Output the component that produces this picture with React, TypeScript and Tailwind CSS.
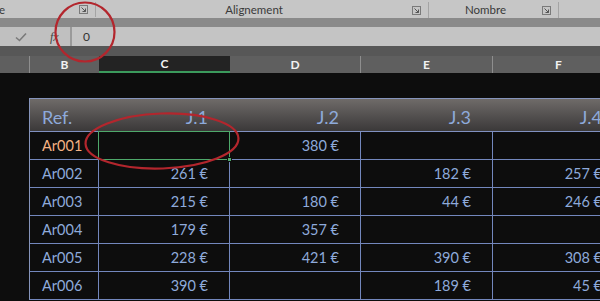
import React from "react";

const rows: string[][] = [
  ["Ar001", "", "380 €", "", ""],
  ["Ar002", "261 €", "", "182 €", "257 €"],
  ["Ar003", "215 €", "180 €", "44 €", "246 €"],
  ["Ar004", "179 €", "357 €", "", ""],
  ["Ar005", "228 €", "421 €", "390 €", "308 €"],
  ["Ar006", "390 €", "", "189 €", "45 €"],
];

const widths = ["w-[69px]", "w-[131px]", "w-[131px]", "w-[132px]", "w-[131px]"];

function Launcher() {
  return (
    <svg width="9" height="9" viewBox="0 0 9 9" className="shrink-0">
      <rect x="0.5" y="0.5" width="8" height="8" fill="none" stroke="#7a7a7a" />
      <path d="M2.5 2.5 L6.5 6.5 M6.5 3.5 V6.5 H3.5" fill="none" stroke="#555" />
    </svg>
  );
}

function RibbonGroup({ label, className }: { label: string; className: string }) {
  return (
    <div className={`flex items-center h-full border-r border-[#a4a4a4] pr-[3px] ${className}`}>
      <span className="flex-1 text-center">{label}</span>
      <div className="w-[13px] flex justify-start">
        <Launcher />
      </div>
    </div>
  );
}

export default function App() {
  return (
    <div className="relative w-[600px] h-[301px] overflow-hidden bg-[#0d0d0d] font-['Lato',sans-serif]">
      {/* ribbon labels */}
      <div className="h-[18px] bg-[#c6c6c6] flex items-start pt-[2px] text-[11.5px] text-[#3a3a3a]">
        <div className="w-[96px] h-[15px] flex items-center border-r border-[#a4a4a4] pr-[3px]">
          <span className="flex-1 -ml-[1px] leading-none">e</span>
          <div className="w-[13px]">
            <Launcher />
          </div>
        </div>
        <RibbonGroup label="Alignement" className="w-[333px] h-[15px]" />
        <RibbonGroup label="Nombre" className="w-[130px] h-[15px]" />
      </div>
      <div className="h-[9px] bg-[#8a8a8a]" />

      {/* formula bar */}
      <div className="h-[19px] bg-[#c0c0c0] flex items-center">
        <div className="w-[70px] h-full flex items-center">
          <svg width="12" height="10" viewBox="0 0 12 10" className="ml-[15px]">
            <path d="M1 5.5 L4.5 8.5 L11 1.5" fill="none" stroke="#7a7a7a" strokeWidth="1.6" />
          </svg>
          <span className="ml-[23px] text-[12px] italic font-['Liberation_Serif',serif] text-[#444]">
            fx
          </span>
        </div>
        <div className="w-[2px] h-full bg-[#9a9a9a]" />
        <div className="flex-1 h-full bg-[#c4c4c4] pl-[11px] flex items-center text-[12px] text-[#333]">
          0
        </div>
      </div>
      <div className="h-[10px] bg-[#575757]" />

      {/* column headers */}
      <div className="h-[17px] bg-[#5f5f5f] flex text-[12px] font-bold text-[#f2f2f2]">
        <div className="w-[30px] shrink-0 border-r border-[#8e8e8e]" />
        <div className="w-[69px] shrink-0 flex items-center justify-center">B</div>
        <div className="w-[131px] shrink-0 flex items-center justify-center bg-[#232323] border-b-2 border-[#3b9a5c]">
          C
        </div>
        <div className="w-[131px] shrink-0 flex items-center justify-center border-r border-[#8e8e8e]">
          D
        </div>
        <div className="w-[132px] shrink-0 flex items-center justify-center border-r border-[#8e8e8e]">
          E
        </div>
        <div className="w-[131px] shrink-0 flex items-center justify-center">F</div>
      </div>

      {/* sheet */}
      <div className="pt-[25px] pl-[29px]">
        <div className="w-[595px] border-l border-t border-[#8594bb]">
          <div className="h-[33px] flex bg-gradient-to-b from-[#6f6b69] to-[#3b3939] border-b border-[#8090c0] text-[18px] text-[#8eaadb]">
            {["Ref.", "J.1", "J.2", "J.3", "J.4"].map((h, i) => (
              <div
                key={h}
                className={`${widths[i]} shrink-0 flex items-center pt-[5px] ${
                  i === 0 ? "pl-[12px]" : "justify-end pr-[22px]"
                }`}
              >
                {h}
              </div>
            ))}
          </div>
          {rows.map((r) => (
            <div key={r[0]} className="h-[28px] flex text-[14.5px]">
              {r.map((v, i) => (
                <div
                  key={i}
                  className={`${widths[i]} shrink-0 relative flex items-center border-r border-b border-[#7387bd] ${
                    i === 0 ? "pl-[12px]" : "justify-end pr-[21px]"
                  } ${r[0] === "Ar001" && i === 0 ? "text-[#f4b183]" : "text-[#8eaadb]"}`}
                >
                  {v}
                  {r[0] === "Ar001" && i === 1 && (
                    <>
                      <div className="absolute z-10 -left-px -top-px -right-px -bottom-px border-[1.5px] border-[#4ea86a]" />
                      <div className="absolute z-10 -right-[3px] -bottom-[3px] w-[5px] h-[5px] bg-[#4ea86a] border border-[#0d0d0d]" />
                    </>
                  )}
                </div>
              ))}
            </div>
          ))}
        </div>
      </div>

      {/* hand-drawn annotations */}
      <svg className="absolute inset-0 z-20 pointer-events-none" width="600" height="301">
        <circle cx="85" cy="32" r="29.5" fill="none" stroke="#b3262d" strokeWidth="2.2" />
        <ellipse
          cx="162"
          cy="141"
          rx="76.5"
          ry="27.5"
          transform="rotate(-2 162 141)"
          fill="none"
          stroke="#b3262d"
          strokeWidth="2.2"
        />
      </svg>
    </div>
  );
}
